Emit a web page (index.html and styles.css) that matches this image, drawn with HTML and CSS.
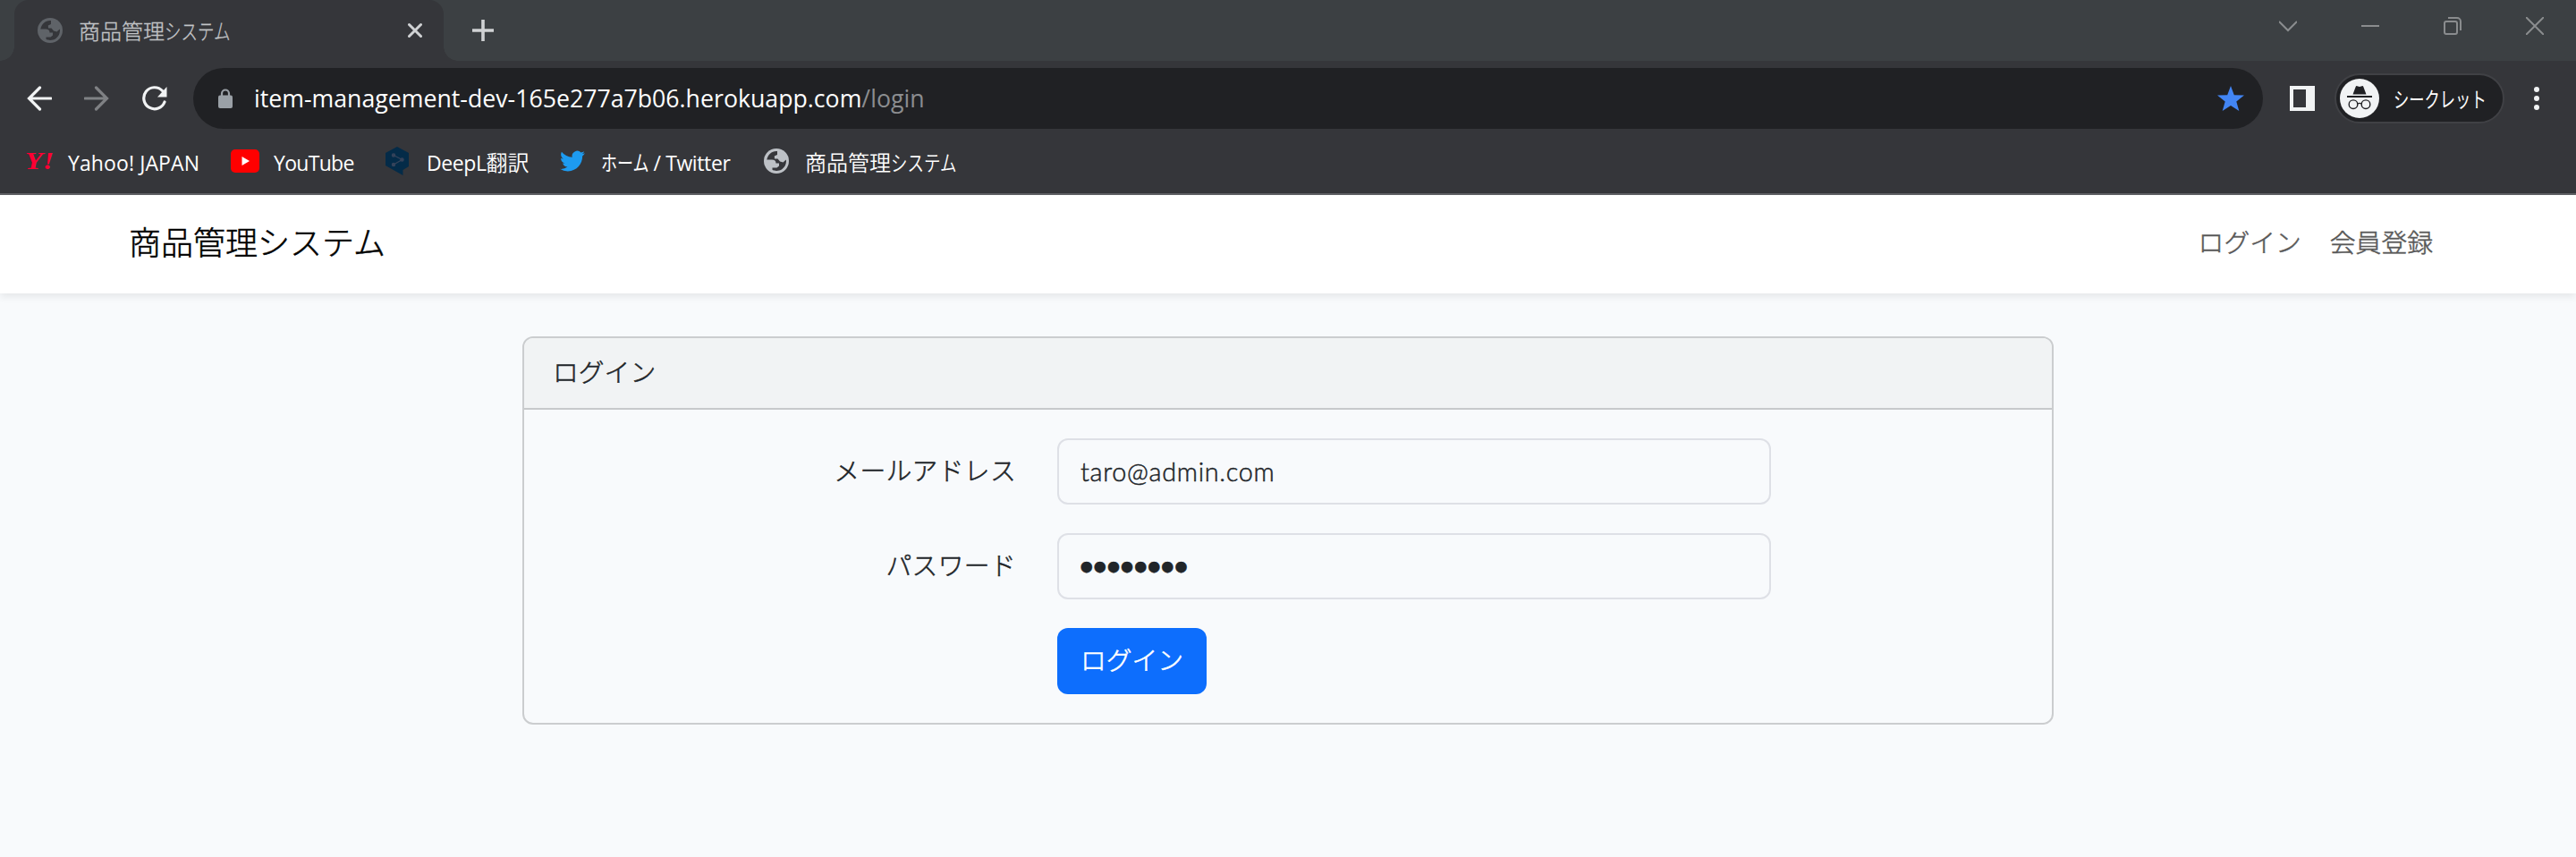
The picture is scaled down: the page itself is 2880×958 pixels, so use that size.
FILE: index.html
```html
<!DOCTYPE html>
<html lang="ja">
<head>
<meta charset="utf-8">
<title>商品管理システム</title>
<link rel="stylesheet" href="styles.css">
</head>
<body>
<svg width="0" height="0" class="defs">
  <symbol id="globe" viewBox="0 0 28 28">
    <circle cx="14" cy="14" r="14" fill="currentColor"/>
    <path d="M15 3C9 2.500 4.500 6.500 3.300 12.500L9 12.500C12 12.500 13.500 14 13.500 16.500L17 16.500L17 19.500L14.500 21.500L9.500 21.500L9.500 23.800C12 25.500 17 25.500 20.500 23C23.500 20.500 25 17.500 25 14L24.800 12.500L21.500 15.500L18 14.500L15.500 11.500L12 11.500L11.800 8.500L15 7Z" class="globe-cut"/>
  </symbol>
</svg>
<div class="tabstrip">
  <div class="tab">
    <svg class="globe tab-globe"><use href="#globe"/></svg>
    <span class="tab-title">商品管理<span class="kana">システム</span></span>
    <svg class="tab-close" viewBox="0 0 16 18"><path d="M1.500 2.500l13 13M14.500 2.500l-13 13"/></svg>
  </div>
  <svg class="new-tab" viewBox="0 0 24 24"><path d="M12 0v24M0 12h24"/></svg>
  <div class="window-buttons">
    <svg viewBox="0 0 20 20"><path d="M0 5l10 10L20 5"/></svg>
    <svg viewBox="0 0 20 20"><path d="M0 10h20"/></svg>
    <svg viewBox="0 0 20 20"><rect x="1" y="5" width="14" height="14" rx="2"/><path d="M5 1h10a4 4 0 0 1 4 4v10"/></svg>
    <svg viewBox="0 0 20 20"><path d="M0 0l20 20M20 0L0 20"/></svg>
  </div>
</div>
<div class="toolbar">
  <svg class="nav-icon back" viewBox="0 0 28 28"><path d="M27 14H3M14.500 2L2.500 14L14.500 26"/></svg>
  <svg class="nav-icon forward" viewBox="0 0 28 28"><path d="M1 14h24M13.500 2L25.500 14L13.500 26"/></svg>
  <svg class="nav-icon reload" viewBox="0 0 28 28"><path d="M25 18A12 12 0 1 1 22.500 5.500"/><path class="solid" d="M27.500 1v11.500H17Z"/></svg>
  <div class="omnibox">
    <svg class="lock" viewBox="0 0 16 22"><rect y="7.500" width="16" height="14.500" rx="2"/><path d="M4 8V5.500a4 4 0 0 1 8 0V8"/></svg>
    <span class="url"><span class="host">item-management-dev-165e277a7b06.herokuapp.com</span><span class="path">/login</span></span>
    <svg class="star" viewBox="0 0 30 28"><path d="M15 0l3.800 10.200L30 10.600l-8.700 6.900L24.300 28 15 22 5.700 28l3-10.500L0 10.600l11.200-.4z"/></svg>
  </div>
  <svg class="side-panel" viewBox="0 0 28 28"><path fill-rule="evenodd" d="M0 0h28v28H0zM4 4v20h14V4z"/></svg>
  <div class="chip">
    <svg class="avatar" viewBox="0 0 44 44">
      <circle cx="22" cy="22" r="22" fill="#f1f3f4"/>
      <g fill="#202124"><path d="M14.500 17.500L17.800 8.800q.4-1 1.500-.6l2.700.9 2.700-.9q1.100-.4 1.500.6l3.300 8.700z"/><rect x="8" y="19" width="28" height="2"/></g>
      <g fill="none" stroke="#202124" stroke-width="1.400"><circle cx="15" cy="28.700" r="4.800"/><circle cx="29" cy="28.700" r="4.800"/><path d="M19.800 28q2.200-1.200 4.400 0"/></g>
    </svg>
    <span class="chip-text">シークレット</span>
  </div>
  <svg class="menu" viewBox="0 0 6 26"><circle cx="3" cy="3" r="3"/><circle cx="3" cy="13" r="3"/><circle cx="3" cy="23" r="3"/></svg>
</div>
<div class="bookmarks">
  <div class="bookmark yahoo">
    <span class="yahoo-mark">Y!</span>
    <span class="label">Yahoo! JAPAN</span>
  </div>
  <div class="bookmark youtube">
    <svg viewBox="0 0 32 26"><rect width="32" height="26" rx="5" fill="#f00"/><path d="M12.500 8l8.500 5-8.500 5z" fill="#fff"/></svg>
    <span class="label">YouTube</span>
  </div>
  <div class="bookmark deepl">
    <svg viewBox="0 0 26 32"><path d="M13 0L26 7v15l-6.500 4v6L0 21V7z" fill="#042b48"/><g fill="#35435a" stroke="#35435a" stroke-width="1.300"><circle cx="9" cy="9.500" r="1.600"/><circle cx="18.500" cy="14.500" r="1.600"/><circle cx="9" cy="20" r="1.600"/><path d="M9 9.500l9.500 5L9 20" fill="none"/></g></svg>
    <span class="label">DeepL<span class="kanji">翻訳</span></span>
  </div>
  <div class="bookmark twitter">
    <svg viewBox="0 0 24 20"><path d="M23.950 2.600a10 10 0 0 1-2.800.8 4.960 4.960 0 0 0 2.150-2.700c-.95.550-2 .950-3.100 1.200a4.920 4.920 0 0 0-8.400 4.480A13.940 13.940 0 0 1 1.650 1.200a4.930 4.930 0 0 0 1.520 6.570 4.900 4.900 0 0 1-2.230-.6v.06a4.930 4.930 0 0 0 3.950 4.820 4.900 4.900 0 0 1-2.200.08 4.940 4.940 0 0 0 4.600 3.420A9.870 9.870 0 0 1 0 17.600a13.900 13.900 0 0 0 7.550 2.200c9.050 0 14-7.500 14-13.980 0-.21 0-.42-.02-.63a9.940 9.940 0 0 0 2.420-2.590z" fill="#1d9bf0"/></svg>
    <span class="label"><span class="kana">ホーム</span> / Twitter</span>
  </div>
  <div class="bookmark items">
    <svg class="globe"><use href="#globe"/></svg>
    <span class="label"><span class="kanji">商品管理<span class="kana">システム</span></span></span>
  </div>
</div>
<nav class="navbar">
  <a class="brand">商品管理システム</a>
  <div class="nav-links"><a>ログイン</a><a>会員登録</a></div>
</nav>
<main class="card">
  <div class="card-header">ログイン</div>
  <form class="card-body">
    <div class="row"><label>メールアドレス</label><div class="field">taro@admin.com</div></div>
    <div class="row"><label>パスワード</label><div class="field password">●●●●●●●●</div></div>
    <div class="row"><button type="button" class="submit">ログイン</button></div>
  </form>
</main>
</body>
</html>
```

FILE: styles.css
```css
* { box-sizing: border-box; }
body { margin: 0; height: 958px; overflow: hidden; background: #f8fafc; color: #212529; font: 300 28.8px/46px Lato, "Noto Sans CJK JP", sans-serif; }
svg { display: block; flex: none; }
.defs { position: absolute; }
.globe { width: 28px; height: 28px; color: #bdc1c6; }
.globe-cut { fill: #35363a; }

.tabstrip { display: flex; height: 68px; padding-left: 16px; background: #3c4043; font: 24px/34px "Open Sans", "Noto Sans CJK JP", sans-serif; }
.tab { position: relative; display: flex; align-items: center; width: 480px; padding: 0 24px 0 26px; background: #35363a; border-radius: 16px 16px 0 0; color: #c3c5c8; }
.tab::before, .tab::after { content: ""; position: absolute; bottom: 0; width: 16px; height: 16px; }
.tab::before { left: -16px; background: radial-gradient(circle at 0 0, #3c4043 15.500px, #35363a 16px); }
.tab::after { right: -16px; background: radial-gradient(circle at 100% 0, #3c4043 15.500px, #35363a 16px); }
.tab-globe { color: #5f6368; }
.tab-title { flex: 1; margin-left: 18px; padding-top: 2px; white-space: nowrap; font-weight: 300; -webkit-text-stroke: .3px; }
.kana { display: inline-block; transform: scaleX(.77); transform-origin: 0 50%; }
.tab-close { width: 16px; height: 18px; }
.tab-close path { fill: none; stroke: #d0d2d4; stroke-width: 3; stroke-linecap: round; }
.new-tab { width: 24px; height: 24px; margin: 22px 0 0 32px; }
.new-tab path { stroke: #d0d2d4; stroke-width: 3.600; }
.window-buttons { display: flex; gap: 72px; margin: 19px 36px 0 auto; }
.window-buttons svg { width: 20px; height: 20px; fill: none; stroke: #8a8c8e; stroke-width: 2; }

.toolbar { display: flex; align-items: center; height: 84px; padding: 0 41px 0 30px; background: #35363a; }
.nav-icon { width: 28px; height: 28px; fill: none; stroke: #f1f3f4; stroke-width: 3.200; stroke-linecap: round; }
.nav-icon .solid { fill: #f1f3f4; stroke: none; }
.forward { margin-left: 36px; stroke: #7f8184; }
.reload { margin-left: 37px; }
.omnibox { display: flex; align-items: center; width: 2314px; height: 68px; margin-left: 29px; padding: 0 21px 0 28px; border-radius: 34px; background: #202124; }
.lock { width: 16px; height: 22px; fill: #9aa0a6; }
.lock path { fill: none; stroke: #9aa0a6; stroke-width: 2.200; }
.url { flex: 1; margin-left: 24px; white-space: nowrap; font: 26.700px/40px "Open Sans", sans-serif; color: #fff; }
.path { color: #8b8d90; }
.star { width: 30px; height: 28px; fill: #4285f4; }
.side-panel { width: 28px; height: 28px; margin-left: 30px; fill: #f1f3f4; }
.chip { display: flex; align-items: center; width: 190px; height: 56px; margin-left: 22px; padding-left: 4px; border: 2px solid #404145; border-radius: 28px; background: #202124; }
.avatar { width: 44px; height: 44px; }
.chip-text { margin-left: 16px; font: 24px/34px "Noto Sans CJK JP", sans-serif; color: #fff; white-space: nowrap; transform: scaleX(.72); transform-origin: 0 50%; }
.menu { width: 6px; height: 26px; margin-left: auto; fill: #f1f3f4; }

.bookmarks { display: flex; height: 66px; padding: 0 0 8px 28px; background: #35363a; border-bottom: 2px solid #5f6064; font: 23px/34px "Open Sans", "Noto Sans CJK JP", sans-serif; color: #fff; }
.bookmark { display: flex; align-items: center; white-space: nowrap; }
.label { padding-top: 3px; }
.kanji { font-size: 24px; letter-spacing: 0; font-weight: 350; }
.yahoo { width: 220px; letter-spacing: .1px; }
.yahoo-mark { width: 48px; color: #ff0033; font: italic bold 28px/30px "Liberation Serif", serif; transform: scaleX(1.150); transform-origin: 0 50%; }
.youtube { width: 183px; letter-spacing: -.7px; }
.youtube svg { width: 32px; height: 26px; margin: 0 16px 0 10px; }
.deepl { width: 195px; letter-spacing: -.4px; }
.deepl svg { width: 26px; height: 32px; margin-right: 20px; }
.twitter { width: 228px; letter-spacing: -.4px; }
.twitter svg { width: 28px; height: 24px; margin-right: 18px; }
.twitter .kana { width: 53px; font-size: 24px; letter-spacing: 0; transform: scaleX(.75); }
.items svg { margin-right: 18px; }

.navbar { display: flex; justify-content: space-between; height: 110px; padding: 0 160px 4px 144px; align-items: center; background: #fff; box-shadow: 0 4px 8px rgba(0,0,0,.075); -webkit-text-stroke: .5px; }
.brand { font-size: 36px; color: #000; }
.nav-links { display: flex; gap: 32px; color: #595959; }
.card { width: 1712px; height: 434px; margin: 48px auto 0; border: 2px solid #cbcdcf; border-radius: 12px; overflow: hidden; -webkit-text-stroke: .5px; }
.card-header { height: 80px; padding: 15px 32px; background: #f1f3f4; border-bottom: 2px solid #c7c9cb; }
.card-body { display: flex; flex-direction: column; gap: 32px; padding-top: 32px; }
.row { display: grid; grid-template-columns: 550px 798px; column-gap: 46px; height: 74px; }
.row label { padding: 13px 0; text-align: right; letter-spacing: .3px; }
.field { padding: 12px 24px; border: 2px solid #dee0e6; border-radius: 12px; letter-spacing: .7px; }
.password { font: 13.500px/46px "Noto Sans CJK JP", sans-serif; letter-spacing: 1.600px; }
.submit { grid-column: 2; width: 167px; padding: 0 0 3px; border: 0; border-radius: 12px; background: #0d6efd; color: #fff; font: inherit; -webkit-text-stroke: .6px; }
```
